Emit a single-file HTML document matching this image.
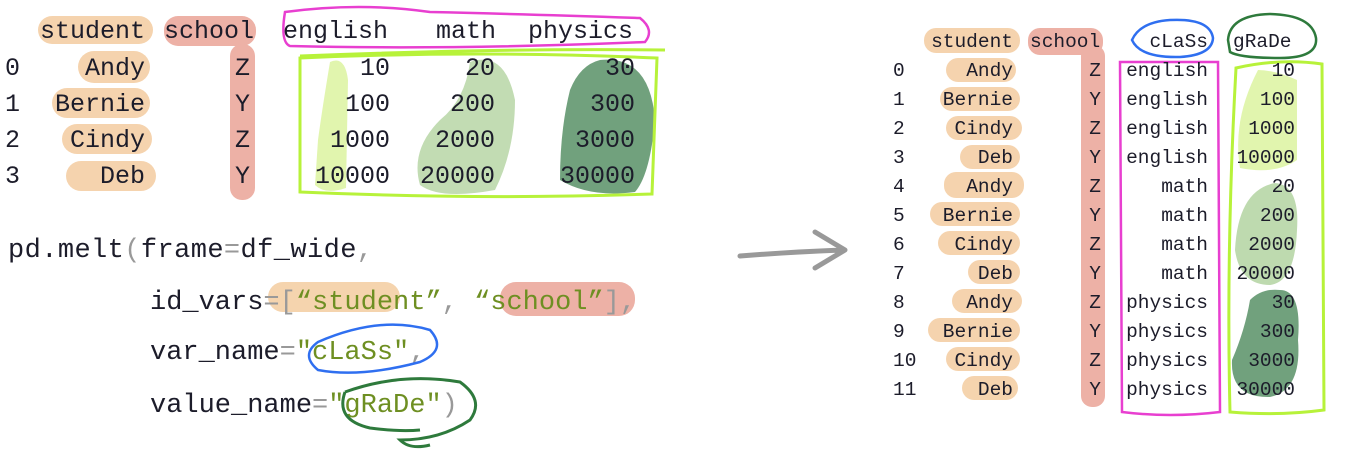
<!DOCTYPE html>
<html><head><style>
html,body{margin:0;padding:0;background:#fff;width:1346px;height:456px;overflow:hidden}
svg{display:block}
text{font-family:"Liberation Mono",monospace;fill:#1c1c2a}
</style></head><body>
<svg width="1346" height="456" viewBox="0 0 1346 456">
<g fill="#f3c99a" opacity="0.8">
<rect x="38" y="16" width="115" height="28" rx="14"/>
<rect x="78" y="51" width="72" height="32" rx="16"/>
<rect x="52" y="88" width="98" height="30" rx="15"/>
<rect x="62" y="124" width="90" height="30" rx="15"/>
<rect x="66" y="161" width="90" height="30" rx="15"/>
<rect x="268" y="282" width="132" height="30" rx="15"/>
</g>
<g fill="#e99e90" opacity="0.8">
<rect x="500" y="282" width="135" height="34" rx="16"/>
<rect x="164" y="16" width="92" height="30" rx="14"/>
<rect x="230" y="44" width="25" height="156" rx="12"/>
</g>
<path d="M330 62 Q345 55 348 80 L346 188 Q325 195 315 185 L318 140 Q322 110 330 62Z" fill="#d9f29a" opacity="0.8"/>
<path d="M470 62 Q505 50 515 100 Q515 150 495 190 Q440 200 420 185 Q410 150 440 120 Q465 100 470 62Z" fill="#b7d6a6" opacity="0.85"/>
<path d="M600 60 Q650 55 655 120 Q650 175 635 192 Q590 198 560 180 Q560 130 570 90 Q580 65 600 60Z" fill="#4e8a5c" opacity="0.8"/>
<path d="M285 12 Q280 42 290 46 Q450 50 645 42 Q655 30 640 18 Q520 14 430 12 Q360 2 285 12Z" fill="none" stroke="#e83fd0" stroke-width="2.5"/>
<path d="M300 58 L300 192 Q480 200 652 194 L657 58 Q480 50 300 58Z M300 56 Q500 48 665 50" fill="none" stroke="#b7f23a" stroke-width="3"/>
<g font-size="25">
<text x="145" y="38" text-anchor="end">student</text>
<text x="164" y="38">school</text>
<text x="283" y="38">english</text>
<text x="436" y="38">math</text>
<text x="528" y="38">physics</text>
<text x="5" y="75">0</text><text x="5" y="111">1</text><text x="5" y="147">2</text><text x="5" y="183">3</text>
<text x="145" y="75" text-anchor="end">Andy</text>
<text x="145" y="111" text-anchor="end">Bernie</text>
<text x="145" y="147" text-anchor="end">Cindy</text>
<text x="145" y="183" text-anchor="end">Deb</text>
<text x="235" y="75">Z</text><text x="235" y="111">Y</text><text x="235" y="147">Z</text><text x="235" y="183">Y</text>
<g text-anchor="end">
<text x="390" y="75">10</text><text x="390" y="111">100</text><text x="390" y="147">1000</text><text x="390" y="183">10000</text>
<text x="495" y="75">20</text><text x="495" y="111">200</text><text x="495" y="147">2000</text><text x="495" y="183">20000</text>
<text x="635" y="75">30</text><text x="635" y="111">300</text><text x="635" y="147">3000</text><text x="635" y="183">30000</text>
</g></g>
<g font-size="27">
<text x="8" y="257" textLength="365">pd.melt<tspan fill="#999">(</tspan>frame<tspan fill="#999">=</tspan>df_wide<tspan fill="#999">,</tspan></text>
<text x="150" y="309">id_vars<tspan fill="#999">=[</tspan><tspan fill="#6e8f22">“student”</tspan><tspan fill="#999">, </tspan><tspan fill="#6e8f22">“school”</tspan><tspan fill="#999">],</tspan></text>
<text x="150" y="359">var_name<tspan fill="#999">=</tspan><tspan fill="#6e8f22">"cLaSs"</tspan><tspan fill="#999">,</tspan></text>
<text x="150" y="412">value_name<tspan fill="#999">=</tspan><tspan fill="#6e8f22">"gRaDe"</tspan><tspan fill="#999">)</tspan></text>
</g>
<path d="M318 342 Q380 315 430 330 Q448 350 420 362 Q360 378 318 370 Q300 355 318 342Z" fill="none" stroke="#2f6ff0" stroke-width="2.5"/>
<path d="M345 392 Q400 372 460 382 Q485 400 470 420 Q440 440 400 440 Q410 450 430 445 M345 392 Q335 420 370 428 Q400 432 420 430" fill="none" stroke="#2e7a3c" stroke-width="3"/>
<path d="M740 256 Q790 252 842 250 M815 232 L845 250 L815 268" fill="none" stroke="#999" stroke-width="5" stroke-linecap="round" stroke-linejoin="round"/>
<g fill="#f3c99a" opacity="0.8">
<rect x="924" y="28" width="96" height="25" rx="12"/>
<rect x="946" y="58" width="70" height="24" rx="12"/><rect x="940" y="87" width="80" height="24" rx="12"/>
<rect x="946" y="116" width="76" height="24" rx="12"/><rect x="960" y="145" width="60" height="24" rx="12"/>
<rect x="944" y="172" width="80" height="26" rx="12"/><rect x="930" y="202" width="90" height="24" rx="12"/>
<rect x="938" y="231" width="82" height="24" rx="12"/><rect x="968" y="260" width="52" height="24" rx="12"/>
<rect x="952" y="289" width="70" height="24" rx="12"/><rect x="928" y="318" width="92" height="24" rx="12"/>
<rect x="946" y="347" width="74" height="24" rx="12"/><rect x="962" y="376" width="56" height="24" rx="12"/>
</g>
<g fill="#e99e90" opacity="0.8">
<rect x="1028" y="28" width="75" height="27" rx="12"/>
<rect x="1081" y="45" width="24" height="362" rx="11"/>
</g>
<path d="M1258 70 Q1275 70 1297 80 L1297 160 Q1275 175 1240 168 Q1232 120 1258 70Z" fill="#d9f29a" opacity="0.8"/>
<path d="M1275 183 Q1300 185 1297 230 Q1295 282 1270 285 Q1240 285 1235 250 Q1238 190 1275 183Z" fill="#b7d6a6" opacity="0.9"/>
<path d="M1280 290 Q1302 290 1298 340 Q1302 390 1270 397 Q1230 398 1232 360 Q1245 330 1250 300 Q1262 288 1280 290Z" fill="#4e8a5c" opacity="0.8"/>
<path d="M1132 40 Q1140 22 1170 20 Q1210 18 1213 38 Q1212 55 1180 57 Q1140 58 1132 40Z" fill="none" stroke="#2f6ff0" stroke-width="2.5"/>
<path d="M1228 40 Q1230 15 1270 14 Q1312 15 1316 38 Q1318 58 1280 58 Q1240 58 1230 52Z" fill="none" stroke="#2e7a3c" stroke-width="2.5"/>
<path d="M1120 62 L1218 62 L1220 412 Q1170 418 1122 412 Z" fill="none" stroke="#e83fd0" stroke-width="2.5"/>
<path d="M1236 68 Q1280 58 1322 64 L1324 410 Q1280 416 1230 412 Q1226 250 1236 68Z" fill="none" stroke="#b7f23a" stroke-width="3"/>
<g font-size="19.5">
<text x="1013" y="47" text-anchor="end">student</text>
<text x="1030" y="47">school</text>
<text x="1208" y="47" text-anchor="end">cLaSs</text>
<text x="1233" y="47">gRaDe</text>
<g>
<text x="893" y="76">0</text><text x="893" y="105">1</text><text x="893" y="134">2</text><text x="893" y="163">3</text>
<text x="893" y="192">4</text><text x="893" y="221">5</text><text x="893" y="250">6</text><text x="893" y="279">7</text>
<text x="893" y="308">8</text><text x="893" y="337">9</text><text x="893" y="366">10</text><text x="893" y="395">11</text>
</g>
<g text-anchor="end">
<text x="1013" y="76">Andy</text><text x="1013" y="105">Bernie</text><text x="1013" y="134">Cindy</text><text x="1013" y="163">Deb</text>
<text x="1013" y="192">Andy</text><text x="1013" y="221">Bernie</text><text x="1013" y="250">Cindy</text><text x="1013" y="279">Deb</text>
<text x="1013" y="308">Andy</text><text x="1013" y="337">Bernie</text><text x="1013" y="366">Cindy</text><text x="1013" y="395">Deb</text>
<text x="1101" y="76">Z</text><text x="1101" y="105">Y</text><text x="1101" y="134">Z</text><text x="1101" y="163">Y</text>
<text x="1101" y="192">Z</text><text x="1101" y="221">Y</text><text x="1101" y="250">Z</text><text x="1101" y="279">Y</text>
<text x="1101" y="308">Z</text><text x="1101" y="337">Y</text><text x="1101" y="366">Z</text><text x="1101" y="395">Y</text>
<text x="1208" y="76">english</text><text x="1208" y="105">english</text><text x="1208" y="134">english</text><text x="1208" y="163">english</text>
<text x="1208" y="192">math</text><text x="1208" y="221">math</text><text x="1208" y="250">math</text><text x="1208" y="279">math</text>
<text x="1208" y="308">physics</text><text x="1208" y="337">physics</text><text x="1208" y="366">physics</text><text x="1208" y="395">physics</text>
<text x="1295" y="76">10</text><text x="1295" y="105">100</text><text x="1295" y="134">1000</text><text x="1295" y="163">10000</text>
<text x="1295" y="192">20</text><text x="1295" y="221">200</text><text x="1295" y="250">2000</text><text x="1295" y="279">20000</text>
<text x="1295" y="308">30</text><text x="1295" y="337">300</text><text x="1295" y="366">3000</text><text x="1295" y="395">30000</text>
</g></g>
</svg>
</body></html>
